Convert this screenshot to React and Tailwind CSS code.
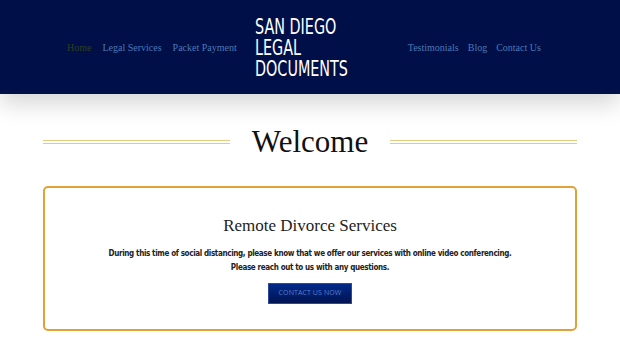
export default function App() {
  const serif = { fontFamily: '"Liberation Serif", "DejaVu Serif", serif' };
  return (
    <div className="w-[620px] h-[343px] bg-white overflow-hidden">
      <header className="relative z-10 h-[94px] bg-[#000f48] flex items-center pl-[67px] shadow-[0_10px_22px_rgba(0,0,0,0.16)]">
        <nav className="flex gap-[11px] text-[10px] text-[#4d78b6] pt-[1px]" style={serif}>
          <span className="text-[#2f3f1e]">Home</span>
          <span>Legal Services</span>
          <span>Packet Payment</span>
        </nav>
        <div className="ml-[18px] w-[93px] text-white uppercase">
          <div
            className="origin-left scale-x-[0.76] text-[21px] leading-[21px] whitespace-nowrap pt-[2px]"
            style={{ fontFamily: '"DejaVu Sans Condensed", "DejaVu Sans", sans-serif' }}
          >
            <div>San Diego</div>
            <div>Legal</div>
            <div>Documents</div>
          </div>
        </div>
        <nav className="ml-[60px] flex gap-[9px] text-[10px] text-[#4d78b6] pt-[1px]" style={serif}>
          <span>Testimonials</span>
          <span>Blog</span>
          <span>Contact Us</span>
        </nav>
      </header>

      <section className="flex items-center px-[43px] pt-[28px]">
        <div className="flex-1 h-[4px] border-y border-[#e8ca7e]" />
        <h1 className="mx-[22px] text-[31px] leading-[40px] text-[#111]" style={serif}>Welcome</h1>
        <div className="flex-1 h-[4px] border-y border-[#e8ca7e]" />
      </section>

      <section className="mx-[43px] mt-[24px] h-[145px] border-2 border-[#dfa236] rounded-[5px] flex flex-col items-center pt-[26px]">
        <h2 className="text-[17px] leading-[24px] text-[#222]" style={serif}>Remote Divorce Services</h2>
        <p
          className="mt-[9px] text-center text-[8px] leading-[14px] font-bold text-[#222] tracking-[-0.35px]"
          style={{ fontFamily: '"DejaVu Sans Condensed", "DejaVu Sans", sans-serif' }}
        >
          During this time of social distancing, please know that we offer our services with online video conferencing.
          <br />
          Please reach out to us with any questions.
        </p>
        <button
          className="mt-[8px] w-[84px] h-[21px] bg-gradient-to-b from-[#022a8a] to-[#001452] text-[#5a7ccc] text-[7px] tracking-[0.1px] border border-[#2a4a9a]"
          style={{ fontFamily: '"Open Sans", "Liberation Sans", sans-serif' }}
        >
          CONTACT US NOW
        </button>
      </section>
    </div>
  );
}
